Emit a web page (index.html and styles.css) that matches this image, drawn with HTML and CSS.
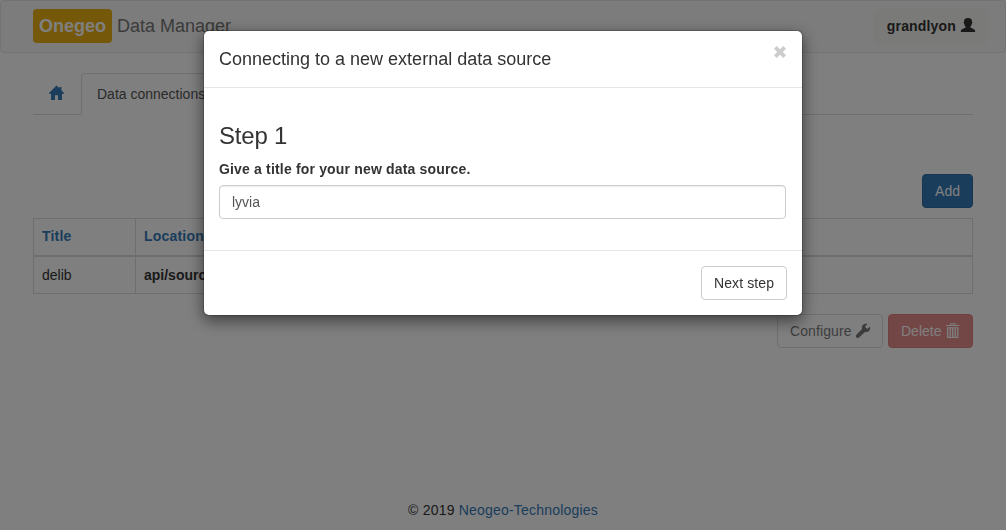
FILE: index.html
```html
<!DOCTYPE html>
<html lang="en">
<head>
<meta charset="utf-8">
<title>Onegeo Data Manager</title>
<link rel="stylesheet" href="styles.css">
</head>
<body>
<div class="page">
  <nav class="navbar">
    <a class="brand"><span class="brand-label">Onegeo</span><span class="brand-text">Data Manager</span></a>
    <div class="user"><span>grandlyon</span><svg class="icon" viewBox="0 0 14 14"><path d="M7 0C9.7 0 11.2 1.4 11.1 3.8C11.5 4.2 11.3 5.4 10.8 5.7C10.6 7 10 8 9.4 8.6V9.6L13 11.2C13.8 11.6 14.2 12.6 14.2 14H-.2C-.2 12.6.2 11.6 1 11.2L4.6 9.6V8.6C4 8 3.4 7 3.2 5.7C2.7 5.4 2.5 4.2 2.9 3.8C2.8 1.4 4.3 0 7 0Z"/></svg></div>
  </nav>
  <div class="container">
    <ul class="tabs">
      <li class="tab home"><svg class="icon" viewBox="0 0 14 14"><path d="M7.5-.6L10.4 2.2V.9H12.4V4.2L15 7V7.7H13V14H9V9.2H6V14H2V7.7H0V7Z"/></svg></li>
      <li class="tab active">Data connections</li>
    </ul>
    <div class="toolbar"><button class="btn primary">Add</button></div>
    <table class="table">
      <thead><tr><th class="col-title">Title</th><th>Location</th></tr></thead>
      <tbody><tr><td>delib</td><td><b>api/sources</b></td></tr></tbody>
    </table>
    <div class="actions">
      <button class="btn configure disabled"><span>Configure</span><svg class="icon" viewBox="0 0 14 14"><path d="M13.9 2.8L11.6 4.7L9.8 4.1L9.3 2.2L11.5.1C9.5-.6 7.4.1 6.5 1.6C5.8 2.7 5.7 3.8 6 4.9L.4 10.8C-.3 11.6-.3 12.7.4 13.4C1.1 14.1 2.3 14.1 3.1 13.4L9 8C10.4 8.4 11.9 8 12.9 7C14.1 5.9 14.5 4.3 13.9 2.8Z"/></svg></button>
      <button class="btn danger disabled"><span>Delete</span><svg class="icon" viewBox="0 0 14 14"><path fill-rule="evenodd" d="M4 1V-.7H9.6V1H13.2V2H.2V1ZM5 1H8.6V.3H5ZM1 3.2H12.4V14H1ZM2.3 4.3V13H3.5V4.3ZM4.8 4.3V13H5.9V4.3ZM7.4 4.3V13H8.5V4.3ZM9.9 4.3V13H11.1V4.3Z"/></svg></button>
    </div>
  </div>
  <footer class="footer">© 2019 <a>Neogeo-Technologies</a></footer>
</div>
<div class="overlay">
  <section class="modal">
    <header class="modal-header">
      <h4>Connecting to a new external data source</h4>
      <svg class="close" viewBox="0 0 12 12"><path d="M2.7 0L6 3.2L9.3 0L12 2.7L8.8 6L12 9.3L9.3 12L6 8.8L2.7 12L0 9.3L3.2 6L0 2.7Z"/></svg>
    </header>
    <div class="modal-body">
      <h3>Step 1</h3>
      <label for="title">Give a title for your new data source.</label>
      <input id="title" type="text" value="lyvia">
    </div>
    <footer class="modal-footer"><button class="btn next">Next step</button></footer>
  </section>
</div>
</body>
</html>
```
FILE: styles.css
```css
* { box-sizing: border-box; }
body {
  margin: 0;
  overflow: hidden;
  font: 14px/20px "Liberation Sans", Arial, sans-serif;
  color: #333;
  background: #fff;
}
.page { height: 530px; display: flex; flex-direction: column; }
.navbar {
  height: 53px;
  flex: none;
  display: flex;
  justify-content: space-between;
  align-items: flex-start;
  padding: 8px 17px 0 32px;
  background: #f8f8f8;
  border: 1px solid #e7e7e7;
  border-radius: 4px;
}
.brand { display: flex; gap: 5px; font-size: 18px; line-height: 34px; color: #777; }
.brand-label { width: 79px; text-align: center; color: #fff; font-weight: bold; background: #ebb013; border-radius: 4px; }
.user {
  height: 35px;
  display: flex;
  align-items: center;
  gap: 5px;
  padding: 0 13px;
  font-weight: bold;
  letter-spacing: .17px;
  background: #f5f5f2;
  border-radius: 5px;
}
.user span { margin-top: -2px; }
.icon { width: 14px; height: 14px; fill: currentColor; overflow: visible; vertical-align: -1px; }
.user .icon { margin-top: -3px; }
.container { padding: 20px 33px 0; }
.tabs { display: flex; height: 42px; margin: 0; padding: 0; list-style: none; border-bottom: 1px solid #ddd; }
.tab { height: 42px; padding: 11px 15px; border: 1px solid transparent; white-space: nowrap; }
.home { width: 48px; padding-top: 10px; color: #337ab7; }
.active { padding-top: 10px; color: #555; background: #fff; border-color: #ddd #ddd #fff; border-radius: 4px 4px 0 0; }
.toolbar { display: flex; justify-content: flex-end; margin: 59px 0 10px; }
.btn {
  height: 34px;
  padding: 6px 12px;
  font: inherit;
  color: #333;
  background: #fff;
  border: 1px solid #ccc;
  border-radius: 4px;
  white-space: nowrap;
}
.primary { color: #fff; background: #337ab7; border-color: #2e6da4; }
.danger { width: 85px; color: #fff; background: #d9534f; border-color: #d43f3a; }
.configure { width: 106px; }
.disabled { display: flex; justify-content: space-between; opacity: .65; }
.disabled .icon { margin-top: 3px; }
.configure span { letter-spacing: .1px; }
.table { width: 100%; table-layout: fixed; border-collapse: collapse; }
.table th, .table td { height: 37px; padding: 8px; text-align: left; border: 1px solid #ddd; }
.table th { padding: 7px 8px 9px; color: #337ab7; letter-spacing: .2px; border-bottom-width: 2px; }
.col-title { width: 102px; }
.actions { display: flex; justify-content: flex-end; gap: 5px; margin-top: 20px; }
.footer { margin-top: auto; padding-bottom: 10px; text-align: center; letter-spacing: .2px; }
.footer a { color: #337ab7; }
.overlay {
  position: fixed;
  inset: 0;
  display: flex;
  justify-content: center;
  align-items: flex-start;
  padding-top: 30px;
  background: rgba(0, 0, 0, .5);
}
.modal {
  width: 600px;
  background: #fff;
  background-clip: padding-box;
  border: 1px solid rgba(0, 0, 0, .2);
  border-radius: 6px;
  box-shadow: 0 5px 15px rgba(0, 0, 0, .5);
}
.modal-header { display: flex; justify-content: space-between; padding: 15px; border-bottom: 1px solid #e5e5e5; }
h4, h3 { margin: 0; font-weight: 500; line-height: 26px; }
h4 { font-size: 18px; }
h3 { font-size: 24px; margin: 20px 0 10px; letter-spacing: -.2px; }
.close { width: 12px; height: 12px; margin-right: 1px; fill: #ccc; }
.modal-body { padding: 15px; height: 162px; }
.modal-body label { display: block; margin-bottom: 6px; font-weight: bold; letter-spacing: .17px; }
.modal-body input {
  display: block;
  width: 567px;
  height: 34px;
  padding: 6px 12px;
  font: inherit;
  color: #555;
  border: 1px solid #ccc;
  border-radius: 4px;
  box-shadow: inset 0 1px 1px rgba(0, 0, 0, .075);
}
.modal-footer { padding: 15px; text-align: right; border-top: 1px solid #e5e5e5; }
.modal-footer .btn { display: block; margin-left: auto; }
.next { width: 86px; letter-spacing: .1px; }
```
